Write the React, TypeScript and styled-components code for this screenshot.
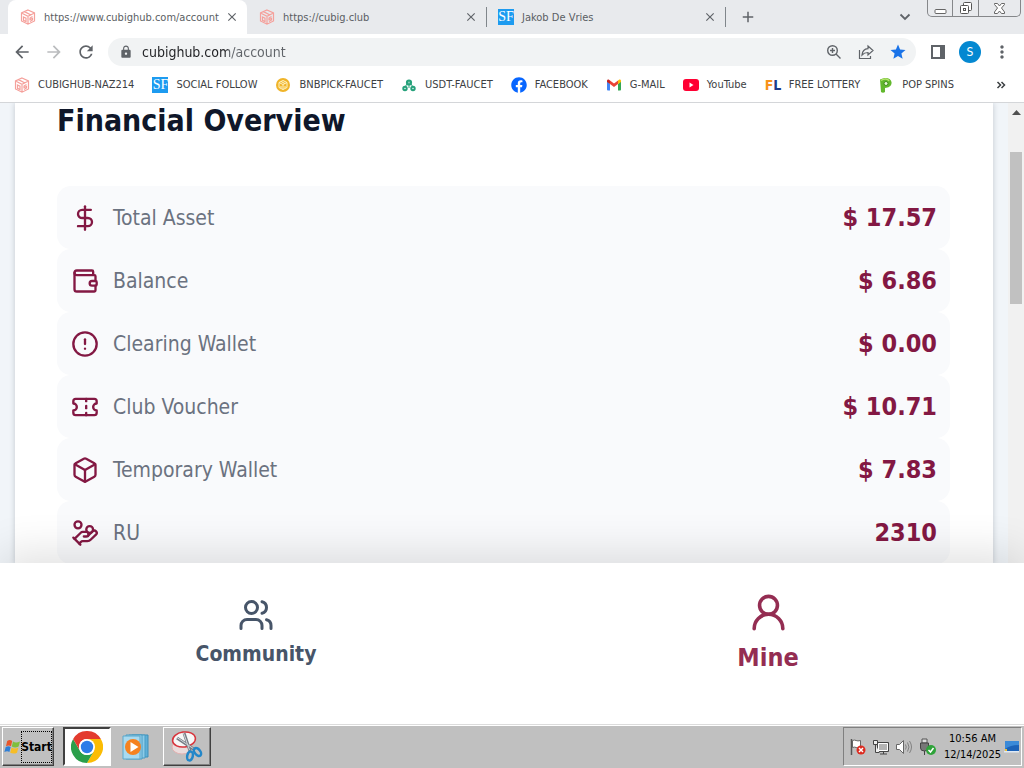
import React from "react";
import styled, { createGlobalStyle, css } from "styled-components";
import { DollarSign, Wallet, CircleAlert, Ticket, Box, HandCoins, Users, UserRound, LucideIcon } from "lucide-react";
import { MdArrowBack, MdArrowForward, MdRefresh, MdLock, MdStar, MdMoreVert, MdClose, MdAdd } from "react-icons/md";
import { FaFacebook } from "react-icons/fa";

const uiFont = `Tahoma, "DejaVu Sans Condensed", "DejaVu Sans", sans-serif`;

const GlobalStyle = createGlobalStyle`
  *, *::before, *::after { box-sizing: border-box; }
  body { margin: 0; font-family: ${uiFont}; background: #fff; }
  button { font: inherit; color: inherit; background: none; border: 0; padding: 0; }
  a { color: inherit; text-decoration: none; }
  svg { display: block; flex: none; }
`;

const Screen = styled.div`
  display: flex;
  flex-direction: column;
  height: 100vh;
  overflow: hidden;
`;

/* ---------- browser frame ---------- */

const TabStrip = styled.header`
  display: flex;
  align-items: flex-start;
  height: 34px;
  padding-left: 8px;
  background: #e8eaed;
`;

const TabItem = styled.div<{ $active?: boolean; $divider?: boolean }>`
  position: relative;
  display: flex;
  align-items: center;
  width: 239px;
  height: 34px;
  padding: 0 7px 0 12px;
  border-radius: 8px 8px 0 0;
  background: ${(p) => (p.$active ? "#fff" : "transparent")};
  ${(p) =>
    p.$divider &&
    css`
      &::after {
        content: "";
        position: absolute;
        right: -1px;
        top: 7px;
        width: 1px;
        height: 20px;
        background: #80868b;
      }
    `}
`;

const TabTitle = styled.button`
  flex: 1;
  display: flex;
  align-items: center;
  gap: 8px;
  min-width: 0;
  font-size: 11px;
  color: #5a5e63;
  white-space: nowrap;
`;

const IconButton = styled.button<{ $size?: number; $color?: string }>`
  display: flex;
  align-items: center;
  justify-content: center;
  flex: none;
  width: ${(p) => p.$size ?? 16}px;
  height: ${(p) => p.$size ?? 16}px;
  color: ${(p) => p.$color ?? "#5f6368"};
`;

const StripTools = styled.div`
  display: flex;
  flex: 1;
  align-items: center;
  justify-content: space-between;
  height: 34px;
  padding: 0 14px 0 15px;
`;

const WindowControls = styled.div`
  display: flex;
  width: 94px;
  height: 17px;
  margin-right: 3px;
  border: 1px solid #85878a;
  border-top: 0;
  border-radius: 0 0 5px 5px;
`;

const WindowButton = styled.button<{ $wide?: boolean }>`
  display: flex;
  align-items: center;
  justify-content: center;
  flex: ${(p) => (p.$wide ? 42 : 25)};
  & + & { border-left: 1px solid #85878a; }
`;

const Toolbar = styled.div`
  display: flex;
  align-items: center;
  height: 36px;
  padding: 0 12px;
  background: #fff;
`;

const HistoryButtons = styled.div`
  display: flex;
  gap: 12px;
  margin-right: 12px;
`;

const AddressBar = styled.label`
  display: flex;
  flex: 1;
  align-items: center;
  height: 28px;
  padding: 0 8px 0 11px;
  border-radius: 14px;
  background: #f1f3f4;
`;

const AddressInput = styled.input`
  flex: 1;
  min-width: 0;
  margin-left: 9px;
  padding: 0;
  border: 0;
  outline: 0;
  font: 14px ${uiFont};
  color: transparent;
  background: linear-gradient(to right, #202124 86px, #5f6368 86px);
  background-clip: text;
`;

const AddressActions = styled.div`
  display: flex;
  gap: 12px;
`;

const ToolbarEnd = styled.div`
  display: flex;
  align-items: center;
  gap: 11px;
  margin-left: 12px;
`;

const Avatar = styled.button`
  width: 22px;
  height: 22px;
  border-radius: 50%;
  background: #0488d1;
  color: #fff;
  font-size: 12px;
  line-height: 22px;
`;

const BookmarkBar = styled.nav`
  display: flex;
  align-items: center;
  gap: 18px;
  height: 33px;
  padding: 0 18px 3px 14px;
  border-bottom: 1px solid #d4d6d9;
  background: #fff;
`;

const Bookmark = styled.a`
  display: flex;
  align-items: center;
  gap: 8px;
  font-size: 11px;
  line-height: 16px;
  color: #3c4043;
  white-space: nowrap;
`;

const Overflow = styled.button`
  margin-left: auto;
`;

const LetterTile = styled.span`
  flex: none;
  width: 16px;
  height: 16px;
  background: #1d9bf0;
  color: #fff;
  font: 14px/16px "Liberation Serif", serif;
  text-align: center;
`;

const LotteryMark = styled.span`
  flex: none;
  width: 16px;
  font: bold 14px/16px ${uiFont};
  color: #1d3a8a;
  b { color: #f7931a; }
`;

/* ---------- page ---------- */

const Viewport = styled.main`
  display: flex;
  flex: 1;
  min-height: 0;
  overflow: hidden;
  background: #f1f5f9;
`;

const Page = styled.div`
  flex: 1;
  padding: 0 15px;
`;

const Card = styled.section`
  min-height: 100%;
  padding: 0 43px 0 42px;
  background: #fff;
  box-shadow: 0 0 6px rgba(15, 23, 42, 0.2);
`;

const Heading = styled.h1`
  margin: 0 0 47px;
  font: bold 30px/36px ${uiFont};
  color: #0f172a;
`;

const AssetList = styled.dl`
  margin: 0;
`;

const AssetRow = styled.div`
  display: flex;
  align-items: center;
  height: 63px;
  padding: 0 13px 0 14px;
  border-radius: 14px;
  background: #f9fafc;
  color: #831843;
`;

const AssetLabel = styled.dt`
  display: flex;
  flex: 1;
  align-items: center;
  gap: 14px;
`;

const AssetName = styled.span`
  font-size: 21px;
  line-height: 30px;
  color: #6b7280;
`;

const AssetValue = styled.dd`
  margin: 0;
  font: bold 25px/32px ${uiFont};
`;

const ScrollTrack = styled.div`
  display: flex;
  flex-direction: column;
  align-items: center;
  width: 16px;
  padding-top: 7px;
  background: #f1f1f1;
`;

const ScrollThumb = styled.div`
  width: 12px;
  height: 152px;
  margin-top: 37px;
  background: #c1c1c1;
`;

const BottomNav = styled.nav`
  position: relative;
  display: grid;
  grid-template-columns: 1fr 1fr;
  height: 161px;
  background: #fff;
  box-shadow: 0 -10px 40px rgba(0, 0, 0, 0.12);
`;

const NavButton = styled.button<{ $active?: boolean }>`
  display: flex;
  flex-direction: column;
  align-items: center;
  gap: ${(p) => (p.$active ? 9 : 6)}px;
  padding-top: ${(p) => (p.$active ? 28 : 34)}px;
  font: bold ${(p) => (p.$active ? 25 : 21)}px/30px ${uiFont};
  color: ${(p) => (p.$active ? "#942d52" : "#475569")};
`;

/* ---------- desktop taskbar ---------- */

const Taskbar = styled.footer`
  position: relative;
  display: flex;
  align-items: stretch;
  height: 44px;
  padding: 2px;
  border-top: 1px solid #dcdcdc;
  box-shadow: inset 0 1px #fff;
  background: #c0c0c0;
`;

const raised = css`
  border: 1px solid;
  border-color: #fff #404040 #404040 #fff;
  box-shadow: inset -1px -1px #808080;
`;

const StartButton = styled.button`
  ${raised}
  display: flex;
  align-items: center;
  width: 52px;
  margin-right: 9px;
  padding-left: 1px;
  && { font: bold 12px ${uiFont}; }
`;

const StartLabel = styled.span`
  display: flex;
  flex: none;
  align-items: center;
  justify-content: center;
  width: 31px;
  height: 32px;
  border: 1px dotted #000;
`;

const TaskButton = styled.button<{ $state: "pressed" | "flat" | "raised" }>`
  display: flex;
  align-items: center;
  justify-content: center;
  width: 48px;
  margin-right: 2px;
  ${(p) => p.$state === "raised" && raised}
  ${(p) =>
    p.$state === "pressed" &&
    css`
      background: #fff;
      border: 2px solid;
      border-color: #404040 #fff #fff #404040;
    `}
`;

const Tray = styled.div`
  display: flex;
  align-items: center;
  gap: 7px;
  margin-left: auto;
  padding: 0 2px 0 6px;
  border: 1px solid;
  border-color: #808080 #fff #fff #808080;
`;

const ClockArea = styled.div`
  display: flex;
  align-items: center;
  gap: 2px;
`;

const Clock = styled.time`
  font-size: 11px;
  line-height: 16px;
  text-align: center;
  color: #000;
`;

/* ---------- drawings ---------- */

const Cube = ({ color = "#f5a09b" }: { color?: string }) => (
  <svg width="16" height="16" viewBox="0 0 16 16" fill="none" stroke={color} strokeWidth="1.200">
    <path d="M8 1 14.500 4v8L8 15.200 1.500 12V4zM1.500 4 8 7.300 14.500 4M8 7.300v7.900M4.500 2.600 11 6M3.500 8l2.500 1.200v3.300L3.500 11.300zM12.500 7.500 10 9v1.500l2.500-1v1.500L10 12.500" />
  </svg>
);

const Coin = () => (
  <svg width="16" height="16" viewBox="0 0 16 16">
    <circle cx="8" cy="8" r="7" fill="#f0b429" />
    <path d="m8 3.500 4 2v5l-4 2-4-2v-5zM4 5.500l4 2 4-2M8 7.500v5M6 4.500l4 2M6 9v2M10 9v2" fill="none" stroke="#fff3c4" />
  </svg>
);

const Tether = () => (
  <svg width="16" height="16" viewBox="0 0 16 16" fill="none" stroke="#26a17b">
    <circle cx="8" cy="5.500" r="2" strokeWidth="2.200" />
    <circle cx="4" cy="11.500" r="1.700" strokeWidth="2" />
    <circle cx="12" cy="11.500" r="1.700" strokeWidth="2" />
    <path d="M8 4v7M6 7l-2 3M10 7l2 3" />
  </svg>
);

const Gmail = () => (
  <svg width="16" height="16" viewBox="0 0 16 16">
    <path d="M1 4v8.500c0 .5.500 1 1 1h2V7z" fill="#4285f4" />
    <path d="M15 4v8.500c0 .5-.5 1-1 1h-2V7z" fill="#34a853" />
    <path d="M12 7V3.500l1-.7c1-.6 2 .1 2 1.200v1z" fill="#fbbc04" />
    <path d="M4 7V3.500l-1-.7c-1-.6-2 .1-2 1.200v1z" fill="#c5221f" />
    <path d="M4 3.500 8 6.500l4-3V7l-4 3-4-3z" fill="#ea4335" />
  </svg>
);

const YouTube = () => (
  <svg width="16" height="16" viewBox="0 0 16 16">
    <rect y="2" width="16" height="12" rx="3" fill="#ff0033" />
    <path d="m6.500 5.500 4 2.500-4 2.500z" fill="#fff" />
  </svg>
);

const PopSpins = () => (
  <svg width="16" height="16" viewBox="0 0 16 16">
    <path d="M2 2.500C6 .3 12.500-.2 13.500 5c.6 4-3 6-6.500 6v4c-1 1-3 1-4 0z" fill="#62b82d" />
    <path d="M3 3.500c3-2 7-2 8 .5" fill="none" stroke="#b6e36c" strokeWidth="1.500" />
    <circle cx="8" cy="6.500" r="2" fill="#e9f7d8" stroke="#3f8f1c" />
  </svg>
);

const ZoomIn = () => (
  <svg width="16" height="16" viewBox="0 0 16 16" fill="none" stroke="#5f6368" strokeWidth="1.400">
    <circle cx="6.500" cy="6.500" r="4.800" />
    <path d="m10 10 4.500 4.500M4 6.500h5M6.500 4v5" />
  </svg>
);

const Share = () => (
  <svg width="16" height="16" viewBox="0 0 16 16" fill="none" stroke="#5f6368" strokeWidth="1.200">
    <path d="M1.500 6v8.500h11V12M10 2l5 4.500-5 4.500V8.500c-3 0-4.500.8-6 2.500.3-3.500 2.500-6 6-6.300z" />
  </svg>
);

const SidePanel = () => (
  <svg width="16" height="16" viewBox="0 0 16 16">
    <path d="M1 1h14v14H1zM3 3v10h7V3z" fill="#5f6368" fillRule="evenodd" />
  </svg>
);

const Chevrons = () => (
  <svg width="10" height="10" viewBox="0 0 10 10" fill="none" stroke="#3c4043" strokeWidth="1.500">
    <path d="m1.500 2 3 3-3 3M5.500 2l3 3-3 3" />
  </svg>
);

const WindowsFlag = () => (
  <svg width="17" height="16" viewBox="0 0 17 16">
    <path d="M3.200 2c2-1.500 3.500-1.200 5 0L7 7.200c-1.500-1-3-1-5 0z" fill="#e8562a" />
    <path d="M9 2.500c2 1.200 4 1.200 7 0l-1.400 5c-2.200 1.200-4.600 1.200-6.800 0z" fill="#7fbf3c" />
    <path d="M1.700 8c2-1 3.500-1 5 0l-1.300 5c-1.500-1-3-1-5 0z" fill="#2f7fd6" />
    <path d="M7.600 8.500c2.200 1.200 4.400 1.200 6.800 0L13 13.700c-2.200 1.200-4.600 1-6.800 0z" fill="#f6bd27" />
  </svg>
);

const Chrome = () => (
  <svg width="32" height="32" viewBox="0 0 32 32">
    <path d="M16 8h13.860A16 16 0 0 1 16 32l6.930-12z" fill="#fbbc04" />
    <path d="M2.140 8 9.070 20A8 8 0 0 0 22.930 20L16 32A16 16 0 0 1 2.140 8z" fill="#2b9f4b" />
    <path d="M2.140 8A16 16 0 0 1 29.860 8H16A8 8 0 0 0 9.070 20z" fill="#e33b2e" />
    <circle cx="16" cy="16" r="8" fill="#fff" />
    <circle cx="16" cy="16" r="6.200" fill="#2e7ce8" />
  </svg>
);

const MediaPlayer = () => (
  <svg width="32" height="32" viewBox="0 0 32 32">
    <path d="M11 4h16v22H11z" fill="#5fb0d8" stroke="#3e8fb8" />
    <path d="M8 4h16v23H8z" fill="#8ccbe8" stroke="#4a9cc4" />
    <path d="M5 4h16v24H5z" fill="#9cd3ec" stroke="#4a9cc4" />
    <path d="M2 5h17v23H2z" fill="#a9daf0" stroke="#5aa8cc" />
    <circle cx="12" cy="16" r="8" fill="#f58220" />
    <path d="m9.500 11 8 5-8 5z" fill="#fff" />
  </svg>
);

const Snipping = () => (
  <svg width="34" height="34" viewBox="0 0 34 34" fill="none">
    <ellipse cx="12" cy="17" rx="10" ry="7" fill="#eadcdc" stroke="#e3b0b0" />
    <ellipse cx="14" cy="9.500" rx="11.500" ry="7.500" fill="#f7f7f7" stroke="#d8343c" strokeWidth="1.500" transform="rotate(-8 14 9.500)" />
    <path d="M7 8 25 20M14 3 20 21" stroke="#777d85" strokeWidth="3" />
    <path d="M7 7.500 24 19M13.500 3l6 17" stroke="#d3d7db" />
    <ellipse cx="20" cy="26" rx="2.800" ry="4.500" stroke="#2387c9" strokeWidth="2.500" transform="rotate(12 20 26)" />
    <ellipse cx="27.500" cy="22" rx="2.800" ry="4.500" stroke="#2387c9" strokeWidth="2.500" transform="rotate(-40 27.500 22)" />
  </svg>
);

const FlagAlert = () => (
  <svg width="16" height="18" viewBox="0 0 16 18">
    <path d="M1.500 1v16" stroke="#555" strokeWidth="1.500" />
    <path d="M2.500 2.500c3-1.500 4 1.500 8 0v7c-4 1.500-5-1.500-8 0z" fill="#fff" stroke="#666" />
    <circle cx="11" cy="12" r="4.500" fill="#dc2b20" />
    <path d="m9 10 4 4m0-4-4 4" stroke="#fff" strokeWidth="1.500" />
  </svg>
);

const Network = () => (
  <svg width="16" height="16" viewBox="0 0 16 16">
    <path d="M4.500 3.500h11v9h-11z" fill="#b4b4b4" stroke="#444" />
    <path d="M5.500 4.500h9v7h-9z" fill="none" stroke="#fff" />
    <path d="M7 15h7M10.500 13v2" fill="none" stroke="#444" />
    <path d="M.5 1.500h4v4h-4zM2.500 5.500v8h4" fill="#eee" stroke="#444" />
  </svg>
);

const Speaker = () => (
  <svg width="16" height="16" viewBox="0 0 16 16" fill="none" stroke="#666">
    <path d="M.5 5.500h3l4-4v13l-4-4h-3z" fill="#fff" />
    <path d="M9.500 5.500q1.500 2.500 0 5M11.500 3.500q3 4.500 0 9M13.500 2q4 6 0 12" stroke="#808080" />
  </svg>
);

const SafeRemove = () => (
  <svg width="18" height="18" viewBox="0 0 18 18">
    <path d="M3 1h5v4H3z" fill="#ddd" stroke="#555" />
    <path d="M1.500 5h8v5q0 3-4 3t-4-3zM5.500 13v4" fill="#777" stroke="#444" />
    <circle cx="12" cy="12" r="5" fill="#2fa33a" />
    <path d="m9.500 12 2 2 3-4" fill="none" stroke="#fff" strokeWidth="1.500" />
  </svg>
);

const Desktop = () => (
  <svg width="16" height="16" viewBox="0 0 16 16">
    <path d="M2 2h14v10H2z" fill="#1c62b8" />
    <path d="M2 2h14v4q-8 0-14 4z" fill="#3b8ad8" />
    <path d="M1 12h15v1.500H1z" fill="#dfe9f2" />
    <path d="M2 10h2v2H2z" fill="#f2c230" />
  </svg>
);

/* ---------- data ---------- */

const tabs = [
  { title: "https://www.cubighub.com/account", icon: <Cube />, active: true },
  { title: "https://cubig.club", icon: <Cube />, divider: true },
  { title: "Jakob De Vries", icon: <LetterTile>SF</LetterTile>, divider: true },
];

const bookmarks = [
  { name: "CUBIGHUB-NAZ214", icon: <Cube /> },
  { name: "SOCIAL FOLLOW", icon: <LetterTile>SF</LetterTile> },
  { name: "BNBPICK-FAUCET", icon: <Coin /> },
  { name: "USDT-FAUCET", icon: <Tether /> },
  { name: "FACEBOOK", icon: <FaFacebook size={16} color="#0866ff" /> },
  { name: "G-MAIL", icon: <Gmail /> },
  { name: "YouTube", icon: <YouTube /> },
  { name: "FREE LOTTERY", icon: <LotteryMark><b>F</b>L</LotteryMark> },
  { name: "POP SPINS", icon: <PopSpins /> },
];

const assets: { name: string; value: string; Icon: LucideIcon }[] = [
  { name: "Total Asset", value: "$ 17.57", Icon: DollarSign },
  { name: "Balance", value: "$ 6.86", Icon: Wallet },
  { name: "Clearing Wallet", value: "$ 0.00", Icon: CircleAlert },
  { name: "Club Voucher", value: "$ 10.71", Icon: Ticket },
  { name: "Temporary Wallet", value: "$ 7.83", Icon: Box },
  { name: "RU", value: "2310", Icon: HandCoins },
];

export default function App() {
  return (
    <Screen>
      <GlobalStyle />
      <TabStrip>
        {tabs.map((t) => (
          <TabItem key={t.title} $active={t.active} $divider={t.divider}>
            <TabTitle>{t.icon}{t.title}</TabTitle>
            <IconButton aria-label="Close tab"><MdClose size={14} /></IconButton>
          </TabItem>
        ))}
        <StripTools>
          <IconButton aria-label="New tab"><MdAdd size={18} /></IconButton>
          <IconButton aria-label="Search tabs">
            <svg width="12" height="8" viewBox="0 0 12 8" fill="none" stroke="#5f6368" strokeWidth="1.800"><path d="m1.500 1.500 4.500 4.500 4.500-4.500" /></svg>
          </IconButton>
        </StripTools>
        <WindowControls>
          <WindowButton aria-label="Minimize">
            <svg width="13" height="15" viewBox="0 0 13 15"><rect x="1" y="8.500" width="11" height="4" rx="1" fill="#fff" stroke="#666" /></svg>
          </WindowButton>
          <WindowButton aria-label="Restore">
            <svg width="14" height="15" viewBox="0 0 14 15" fill="#fff" stroke="#555"><rect x="4.500" y="1.500" width="8" height="8" rx="1" /><rect x="1.500" y="4.500" width="8" height="8" rx="1" /><rect x="4.500" y="7.500" width="2" height="2" /></svg>
          </WindowButton>
          <WindowButton $wide aria-label="Close">
            <svg width="13" height="13" viewBox="0 0 13 13" fill="#fff" stroke="#666"><path d="M1.500 1.500h3l2 2.500 2-2.500h3v1L8.500 6l3 4v1.500h-3l-2-2.500-2 2.500h-3V10l3-4-3-3.500z" /></svg>
          </WindowButton>
        </WindowControls>
      </TabStrip>

      <Toolbar>
        <HistoryButtons>
          <IconButton $size={20} aria-label="Back"><MdArrowBack size={20} /></IconButton>
          <IconButton $size={20} $color="#babcbe" aria-label="Forward"><MdArrowForward size={20} /></IconButton>
          <IconButton $size={20} aria-label="Reload"><MdRefresh size={20} /></IconButton>
        </HistoryButtons>
        <AddressBar>
          <MdLock size={14} color="#5f6368" />
          <AddressInput aria-label="Address" defaultValue="cubighub.com/account" />
          <AddressActions>
            <IconButton $size={20} aria-label="Zoom"><ZoomIn /></IconButton>
            <IconButton $size={20} aria-label="Share"><Share /></IconButton>
            <IconButton $size={20} $color="#1a73e8" aria-label="Bookmark"><MdStar size={18} /></IconButton>
          </AddressActions>
        </AddressBar>
        <ToolbarEnd>
          <IconButton $size={20} aria-label="Side panel"><SidePanel /></IconButton>
          <Avatar aria-label="Profile">S</Avatar>
          <IconButton $size={20} aria-label="Menu"><MdMoreVert size={20} /></IconButton>
        </ToolbarEnd>
      </Toolbar>

      <BookmarkBar aria-label="Bookmarks">
        {bookmarks.map((b) => (
          <Bookmark key={b.name} href="#">{b.icon}{b.name}</Bookmark>
        ))}
        <Overflow aria-label="More bookmarks"><Chevrons /></Overflow>
      </BookmarkBar>

      <Viewport>
        <Page>
          <Card>
            <Heading>Financial Overview</Heading>
            <AssetList>
              {assets.map(({ name, value, Icon }) => (
                <AssetRow key={name}>
                  <AssetLabel><Icon size={28} /><AssetName>{name}</AssetName></AssetLabel>
                  <AssetValue>{value}</AssetValue>
                </AssetRow>
              ))}
            </AssetList>
          </Card>
        </Page>
        <ScrollTrack>
          <svg width="9" height="5" viewBox="0 0 9 5"><path d="M0 5 4.500 0 9 5z" fill="#505050" /></svg>
          <ScrollThumb />
        </ScrollTrack>
      </Viewport>

      <BottomNav aria-label="Main">
        <NavButton><Users size={36} />Community</NavButton>
        <NavButton $active><UserRound size={43} />Mine</NavButton>
      </BottomNav>

      <Taskbar>
        <StartButton><WindowsFlag /><StartLabel>Start</StartLabel></StartButton>
        <TaskButton $state="pressed" aria-label="Chrome"><Chrome /></TaskButton>
        <TaskButton $state="flat" aria-label="Media Player"><MediaPlayer /></TaskButton>
        <TaskButton $state="raised" aria-label="Snipping Tool"><Snipping /></TaskButton>
        <Tray>
          <FlagAlert /><Network /><Speaker /><SafeRemove />
          <ClockArea>
            <Clock>10:56 AM<br />12/14/2025</Clock>
            <Desktop />
          </ClockArea>
        </Tray>
      </Taskbar>
    </Screen>
  );
}
